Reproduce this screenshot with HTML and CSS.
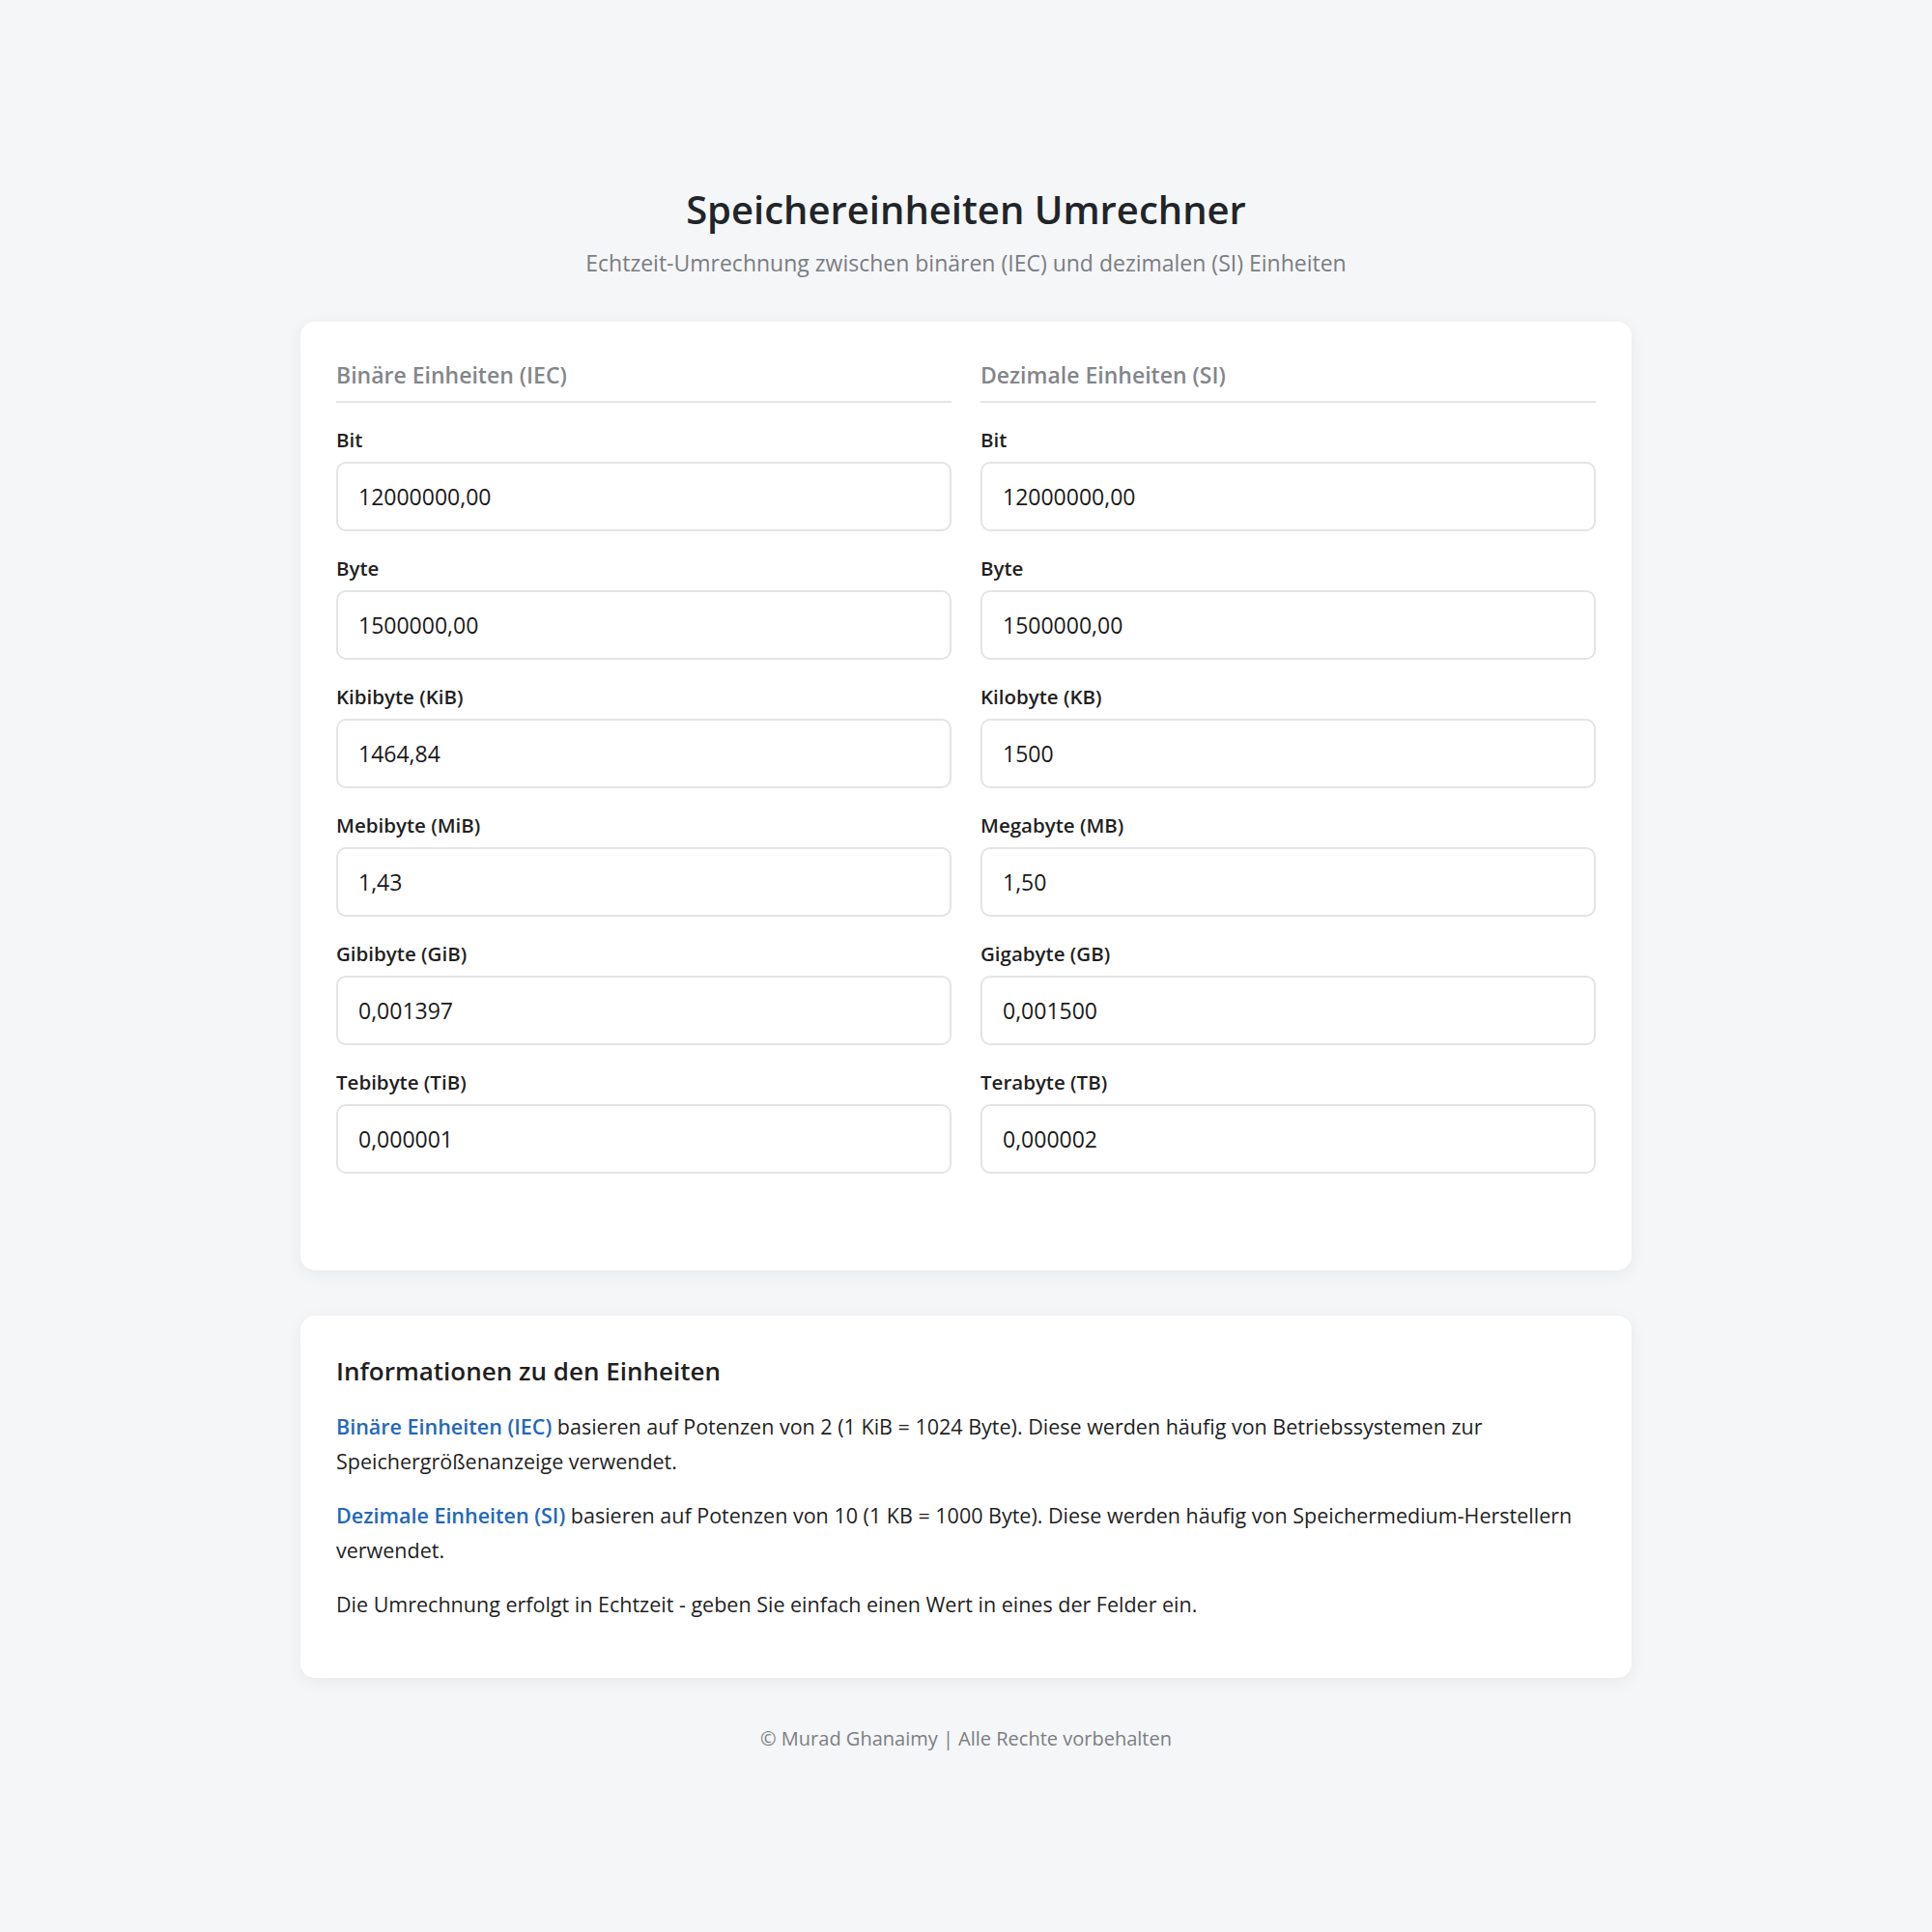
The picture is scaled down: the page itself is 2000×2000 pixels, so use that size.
FILE: index.html
```html
<!DOCTYPE html>
<html lang="de">

<head>
    <meta charset="UTF-8">
    <meta name="viewport" content="width=device-width, initial-scale=1.0">
    <title>Speichereinheiten Umrechner</title>
    <link rel="stylesheet" href="styles.css">
</head>

<body>
    <div class="container">
        <header class="page-header">
            <h1>Speichereinheiten Umrechner</h1>
            <p class="subtitle">Echtzeit-Umrechnung zwischen binären (IEC) und dezimalen (SI) Einheiten</p>
        </header>

        <main class="card converter">
            <div class="unit-columns">
                <section class="unit-group">
                    <h2 class="group-title">Binäre Einheiten (IEC)</h2>
                    <div class="field">
                        <label for="bin-bit">Bit</label>
                        <input type="text" id="bin-bit" value="12000000,00">
                    </div>
                    <div class="field">
                        <label for="bin-byte">Byte</label>
                        <input type="text" id="bin-byte" value="1500000,00">
                    </div>
                    <div class="field">
                        <label for="kib">Kibibyte (KiB)</label>
                        <input type="text" id="kib" value="1464,84">
                    </div>
                    <div class="field">
                        <label for="mib">Mebibyte (MiB)</label>
                        <input type="text" id="mib" value="1,43">
                    </div>
                    <div class="field">
                        <label for="gib">Gibibyte (GiB)</label>
                        <input type="text" id="gib" value="0,001397">
                    </div>
                    <div class="field">
                        <label for="tib">Tebibyte (TiB)</label>
                        <input type="text" id="tib" value="0,000001">
                    </div>
                </section>

                <section class="unit-group">
                    <h2 class="group-title">Dezimale Einheiten (SI)</h2>
                    <div class="field">
                        <label for="dec-bit">Bit</label>
                        <input type="text" id="dec-bit" value="12000000,00">
                    </div>
                    <div class="field">
                        <label for="dec-byte">Byte</label>
                        <input type="text" id="dec-byte" value="1500000,00">
                    </div>
                    <div class="field">
                        <label for="kb">Kilobyte (KB)</label>
                        <input type="text" id="kb" value="1500">
                    </div>
                    <div class="field">
                        <label for="mb">Megabyte (MB)</label>
                        <input type="text" id="mb" value="1,50">
                    </div>
                    <div class="field">
                        <label for="gb">Gigabyte (GB)</label>
                        <input type="text" id="gb" value="0,001500">
                    </div>
                    <div class="field">
                        <label for="tb">Terabyte (TB)</label>
                        <input type="text" id="tb" value="0,000002">
                    </div>
                </section>
            </div>
        </main>

        <section class="card info">
            <h3>Informationen zu den Einheiten</h3>
            <p><span class="hl">Binäre Einheiten (IEC)</span> basieren auf Potenzen von 2 (1 KiB = 1024 Byte). Diese werden häufig von Betriebssystemen zur Speichergrößenanzeige verwendet.</p>
            <p><span class="hl">Dezimale Einheiten (SI)</span> basieren auf Potenzen von 10 (1 KB = 1000 Byte). Diese werden häufig von Speichermedium-Herstellern verwendet.</p>
            <p>Die Umrechnung erfolgt in Echtzeit - geben Sie einfach einen Wert in eines der Felder ein.</p>
        </section>

        <footer class="page-footer">© Murad Ghanaimy | Alle Rechte vorbehalten</footer>
    </div>
</body>

</html>
```

FILE: styles.css
```css
* {
    margin: 0;
    box-sizing: border-box;
}

body {
    margin: 0;
    background-color: #f5f6f8;
    color: #1f1f1f;
    font-family: "Open Sans", "Noto Sans", sans-serif;
}

.container {
    max-width: 1378px;
    margin: auto;
    padding: 193px 0 120px;
}

.page-header {
    text-align: center;
    margin-bottom: 45px;
}

.page-header h1 {
    font-size: 40px;
    line-height: 48px;
    font-weight: 600;
    color: #212529;
    margin-bottom: 15px;
}

.subtitle {
    font-size: 23px;
    line-height: 32px;
    color: #7a7d82;
}

.card {
    background-color: #ffffff;
    border-radius: 15px;
    box-shadow: 0 4px 18px rgba(0, 0, 0, 0.06);
    padding: 38px 37px;
}

.converter {
    padding-bottom: 77px;
}

.unit-columns {
    display: grid;
    grid-template-columns: 1fr 1fr;
    gap: 30px;
}

.group-title {
    font-size: 23px;
    line-height: 34px;
    font-weight: 600;
    color: #83868b;
    padding-bottom: 10px;
    border-bottom: 2px solid #e4e5e7;
    margin-bottom: 23px;
}

.field {
    margin-bottom: 23px;
}

.field label {
    display: block;
    font-size: 20.5px;
    line-height: 30px;
    font-weight: 600;
    color: #1f1f1f;
    margin-bottom: 8px;
}

.field input {
    display: block;
    width: 100%;
    height: 72px;
    padding: 0 21px;
    border: 2px solid #e3e4e6;
    border-radius: 10px;
    background-color: #ffffff;
    font-family: inherit;
    font-size: 23px;
    color: #1a1a1a;
    outline: none;
}

.info {
    margin-top: 47px;
}

.info h3 {
    font-size: 26px;
    line-height: 39px;
    font-weight: 600;
    color: #1f1f1f;
    margin-bottom: 20px;
}

.info p {
    font-size: 21.5px;
    line-height: 36px;
    margin-bottom: 20px;
}

.hl {
    color: #2468b8;
    font-weight: 600;
}

.page-footer {
    margin-top: 48px;
    text-align: center;
    font-size: 20px;
    line-height: 30px;
    color: #7b7e83;
}
```
